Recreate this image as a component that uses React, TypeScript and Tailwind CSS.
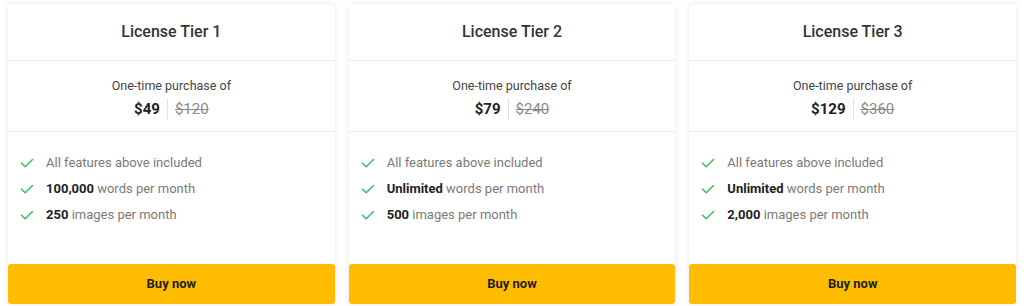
import React from "react";

type Tier = {
  name: string;
  price: string;
  old: string;
  words: string;
  images: string;
};

const tiers: Tier[] = [
  { name: "License Tier 1", price: "$49", old: "$120", words: "100,000", images: "250" },
  { name: "License Tier 2", price: "$79", old: "$240", words: "Unlimited", images: "500" },
  { name: "License Tier 3", price: "$129", old: "$360", words: "Unlimited", images: "2,000" },
];

function Tick() {
  return (
    <svg width="14" height="14" viewBox="0 0 14 14" fill="none" className="shrink-0">
      <path d="M1.5 7.2 L5.2 10.8 L12.5 3.5" stroke="#3fbf6a" strokeWidth="1.6" strokeLinecap="round" strokeLinejoin="round" />
    </svg>
  );
}

function Feature({ bold, rest }: { bold?: string; rest: string }) {
  return (
    <div className="flex items-center h-[26px]">
      <div className="w-[26px] flex items-center">
        <Tick />
      </div>
      <span className="text-[13px] text-[#7a7a7a]">
        {bold && <span className="font-bold text-[#222]">{bold} </span>}
        {rest}
      </span>
    </div>
  );
}

function Card({ t }: { t: Tier }) {
  return (
    <div className="flex-1 flex flex-col bg-white rounded-[3px] shadow-[0_0_6px_rgba(0,0,0,0.09)]">
      <div className="h-[57px] flex items-center justify-center border-b border-[#ececec]">
        <span className="text-[16px] font-medium text-[#333]">{t.name}</span>
      </div>
      <div className="h-[71px] flex flex-col items-center border-b border-[#ececec] pt-[16px]">
        <span className="text-[12.5px] text-[#444] leading-[18px]">One-time purchase of</span>
        <div className="flex items-center mt-[2px] h-[24px]">
          <span className="text-[15px] font-bold text-[#222]">{t.price}</span>
          <span className="mx-[7px] w-px h-[22px] bg-[#e2e2e2]" />
          <span className="text-[15px] text-[#8a8a8a] line-through">{t.old}</span>
        </div>
      </div>
      <div className="flex-1 px-[12px] pt-[18px]">
        <Feature rest="All features above included" />
        <Feature bold={t.words} rest="words per month" />
        <Feature bold={t.images} rest="images per month" />
      </div>
      <button className="h-[40px] w-full bg-[#ffbc00] rounded-[3px] text-[13px] font-bold text-[#222]">
        Buy now
      </button>
    </div>
  );
}

export default function App() {
  return (
    <div
      className="w-[1024px] h-[306px] bg-white flex gap-[14px] px-[8px] pt-[4px] pb-[2px]"
      style={{ fontFamily: "Roboto, 'Liberation Sans', sans-serif" }}
    >
      {tiers.map((t) => (
        <Card key={t.name} t={t} />
      ))}
    </div>
  );
}
